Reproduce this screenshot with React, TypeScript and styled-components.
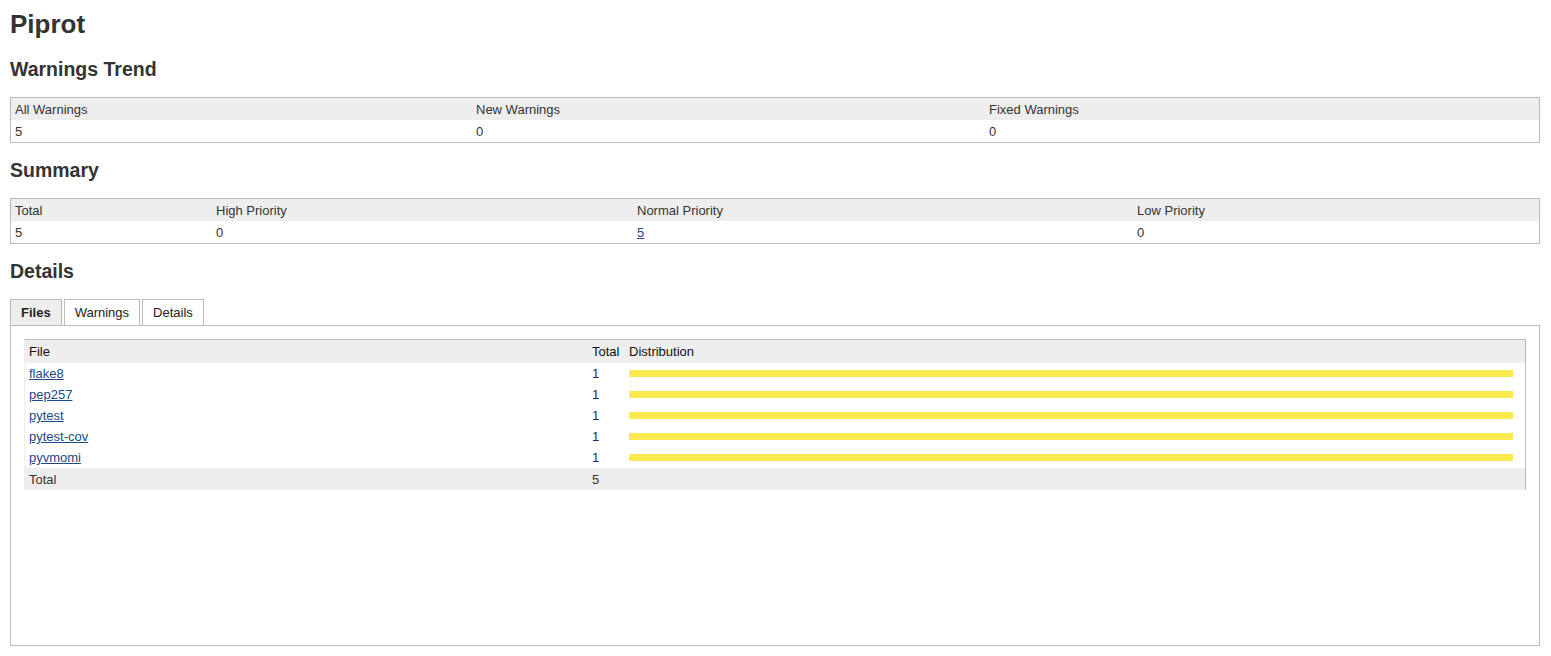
import styled, { createGlobalStyle } from "styled-components";

const GlobalStyle = createGlobalStyle`
  body {
    margin: 0;
    background: #fff;
    font-family: "Liberation Sans", Arial, sans-serif;
    font-size: 13px;
    color: #333;
  }
`;

const Page = styled.div`
  padding: 0 11px 0 10px;
`;

const Title = styled.h1`
  margin: 9px 0 19px;
  font-size: 26px;
  line-height: 30px;
  font-weight: bold;
  color: #333;
`;

const SectionTitle = styled.h2`
  margin: 0 0 17px;
  font-size: 19.5px;
  line-height: 22px;
  font-weight: bold;
  color: #333;
`;

const Pane = styled.table`
  width: 100%;
  border: 1px solid #bbb;
  border-collapse: separate;
  border-spacing: 0;
  table-layout: fixed;
  margin-bottom: 16px;
`;

const HeadCell = styled.th<{ $width?: number; $height?: number }>`
  box-sizing: border-box;
  width: ${(p) => (p.$width ? `${p.$width}px` : "auto")};
  height: ${(p) => p.$height ?? 22}px;
  padding: 0 4px;
  background: #eee;
  font-weight: normal;
  text-align: left;
  vertical-align: middle;
`;

const Cell = styled.td`
  height: 22px;
  padding: 0 4px;
  vertical-align: middle;
`;

const Link = styled.a`
  color: #204a87;
  text-decoration: underline;
`;

const Tabs = styled.div`
  display: flex;
  gap: 2px;
`;

const Tab = styled.div<{ $active?: boolean }>`
  height: 25px;
  padding: 0 10px;
  display: flex;
  align-items: center;
  border: 1px solid #bbb;
  border-bottom: none;
  background: ${(p) => (p.$active ? "#eee" : "#fff")};
  font-weight: ${(p) => (p.$active ? "bold" : "normal")};
  color: #222;
`;

const TabPanel = styled.div`
  box-sizing: border-box;
  height: 321px;
  padding: 13px;
  border: 1px solid #bbb;
`;

const FileTable = styled.table`
  width: 100%;
  border-collapse: separate;
  border-spacing: 0;
  table-layout: fixed;
  border-top: 1px solid #bbb;
  border-right: 1px solid #bbb;
  border-left: 1px solid #eee;
`;

const FileHead = styled(HeadCell)`
  color: #111;
`;

const FileCell = styled.td<{ $navy?: boolean }>`
  height: 21px;
  padding: 0 4px;
  vertical-align: middle;
  color: ${(p) => (p.$navy ? "#23236e" : "#333")};
`;

const FooterCell = styled.td`
  height: 22px;
  padding: 0 4px;
  background: #eee;
  vertical-align: middle;
`;

const Bar = styled.div`
  height: 7px;
  margin-right: 8px;
  background: #fce94f;
`;

const files = ["flake8", "pep257", "pytest", "pytest-cov", "pyvmomi"];

export default function App() {
  return (
    <Page>
      <GlobalStyle />
      <Title>Piprot</Title>

      <SectionTitle>Warnings Trend</SectionTitle>
      <Pane>
        <thead>
          <tr>
            <HeadCell $width={461}>All Warnings</HeadCell>
            <HeadCell $width={513}>New Warnings</HeadCell>
            <HeadCell>Fixed Warnings</HeadCell>
          </tr>
        </thead>
        <tbody>
          <tr>
            <Cell>5</Cell>
            <Cell>0</Cell>
            <Cell>0</Cell>
          </tr>
        </tbody>
      </Pane>

      <SectionTitle>Summary</SectionTitle>
      <Pane>
        <thead>
          <tr>
            <HeadCell $width={201}>Total</HeadCell>
            <HeadCell $width={421}>High Priority</HeadCell>
            <HeadCell $width={500}>Normal Priority</HeadCell>
            <HeadCell>Low Priority</HeadCell>
          </tr>
        </thead>
        <tbody>
          <tr>
            <Cell>5</Cell>
            <Cell>0</Cell>
            <Cell>
              <Link href="#">5</Link>
            </Cell>
            <Cell>0</Cell>
          </tr>
        </tbody>
      </Pane>

      <SectionTitle>Details</SectionTitle>
      <Tabs>
        <Tab $active>Files</Tab>
        <Tab>Warnings</Tab>
        <Tab>Details</Tab>
      </Tabs>
      <TabPanel>
        <FileTable>
          <thead>
            <tr>
              <FileHead $width={563} $height={23}>File</FileHead>
              <FileHead $width={37} $height={23}>Total</FileHead>
              <FileHead $height={23}>Distribution</FileHead>
            </tr>
          </thead>
          <tbody>
            {files.map((name) => (
              <tr key={name}>
                <FileCell>
                  <Link href="#">{name}</Link>
                </FileCell>
                <FileCell $navy>1</FileCell>
                <FileCell>
                  <Bar />
                </FileCell>
              </tr>
            ))}
          </tbody>
          <tfoot>
            <tr>
              <FooterCell>Total</FooterCell>
              <FooterCell>5</FooterCell>
              <FooterCell />
            </tr>
          </tfoot>
        </FileTable>
      </TabPanel>
    </Page>
  );
}
